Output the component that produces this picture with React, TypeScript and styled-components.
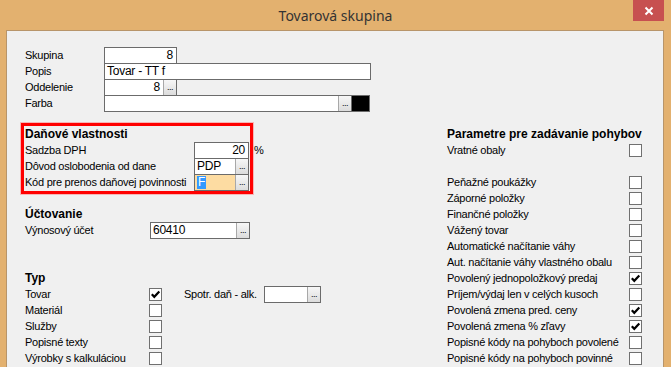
import React from "react";
import styled, { createGlobalStyle } from "styled-components";

const GlobalStyle = createGlobalStyle`
  html, body {
    margin: 0;
    padding: 0;
  }

  body {
    background: #e3b16f;
    font-family: "Liberation Sans", Arial, sans-serif;
  }
`;

const Window = styled.div`
  position: relative;
  display: flex;
  flex-direction: column;
  width: 671px;
  height: 367px;
  overflow: hidden;
  background: #e3b16f;
`;

const TitleBar = styled.div`
  flex: none;
  display: flex;
  align-items: center;
  justify-content: center;
  height: 30px;
  font-family: "Noto Sans", "Open Sans", sans-serif;
  font-size: 14px;
  color: #333;
`;

const CloseButton = styled.div`
  position: absolute;
  top: 0;
  right: 7px;
  display: flex;
  align-items: center;
  justify-content: center;
  width: 31px;
  height: 21px;
  background: #c75050;
`;

const Client = styled.div`
  flex: 1;
  width: 658px;
  margin-left: 6px;
  box-sizing: border-box;
  padding-top: 16px;
  background: #f0f0f0;
  border: 1px solid #b8956a;
  border-bottom: none;
  font-family: "Liberation Sans", Arial, sans-serif;
  font-size: 11px;
  letter-spacing: -0.25px;
  color: #000;
`;

const TopForm = styled.div`
  padding-left: 18px;
`;

const Row = styled.div`
  display: flex;
  align-items: flex-start;
  height: 16px;
  line-height: 16px;
`;

const Label = styled.div<{ $width: number }>`
  flex: none;
  width: ${(p) => p.$width}px;
  white-space: nowrap;
`;

const Field = styled.div<{ $width: number; $bg?: string }>`
  position: relative;
  flex: none;
  display: flex;
  width: ${(p) => p.$width}px;
  height: 17px;
  box-sizing: border-box;
  border: 1px solid #6b6b6b;
  background: ${(p) => p.$bg ?? "#fff"};
`;

const FieldValue = styled.div<{ $align?: "left" | "right" }>`
  flex: 1;
  padding: 0 ${(p) => (p.$align === "right" ? "3px" : "2px")};
  line-height: 15px;
  font-size: 12px;
  text-align: ${(p) => p.$align ?? "left"};
  white-space: nowrap;
  overflow: hidden;
`;

const EllipsisButton = styled.div`
  flex: none;
  display: flex;
  align-items: center;
  justify-content: center;
  width: 12px;
  border-left: 1px solid #a8a8a8;
  background: linear-gradient(#f7f7f7, #dcdcdc);
  font-size: 9px;
  line-height: 15px;
  letter-spacing: -0.5px;
`;

const Swatch = styled.div`
  flex: none;
  width: 19px;
  height: 17px;
  margin-left: -1px;
  box-sizing: border-box;
  border: 1px solid #6b6b6b;
  background: #000;
`;

const Suffix = styled.span`
  position: absolute;
  top: 0;
  left: calc(100% + 6px);
  line-height: 15px;
  font-size: 11px;
`;

const Selection = styled.span`
  display: inline-block;
  padding: 0 1px;
  line-height: 13px;
  background: #3399ff;
  color: #fff;
`;

const Columns = styled.div`
  display: flex;
  margin-top: 12px;
  padding-left: 14px;
`;

const LeftColumn = styled.div`
  flex: none;
  width: 426px;
`;

const RightColumn = styled.div`
  flex: none;
  width: 196px;
  padding-top: 3px;
`;

const TaxBox = styled.div`
  width: 232px;
  box-sizing: border-box;
  padding: 0 1px 1px 1px;
  border: 3px solid #f00;
  outline: 1px solid rgba(255, 110, 110, 0.45);
`;

const Block = styled.div<{ $top: number }>`
  margin-top: ${(p) => p.$top}px;
  padding-left: 4px;
`;

const SectionHeader = styled.div`
  height: 16px;
  line-height: 16px;
  font-size: 12px;
  font-weight: bold;
  letter-spacing: 0;
  white-space: nowrap;
`;

const CheckBox = styled.span`
  flex: none;
  display: flex;
  align-items: center;
  justify-content: center;
  width: 13px;
  height: 13px;
  margin-top: 2px;
  box-sizing: border-box;
  border: 1px solid #707070;
  background: #fff;
`;

const Spacer = styled.div`
  height: 16px;
`;

const SideLabel = styled(Label)`
  margin-left: 22px;
`;

const Check: React.FC<{ checked?: boolean }> = ({ checked }) => (
  <CheckBox>
    {checked && (
      <svg width="11" height="11" viewBox="0 0 11 11">
        <path d="M1.8 5.2 L4.3 7.8 L9.3 2.6" fill="none" stroke="#000" strokeWidth="2.2" />
      </svg>
    )}
  </CheckBox>
);

const movementOptions: { label: string; checked?: boolean }[] = [
  { label: "Peňažné poukážky" },
  { label: "Záporné položky" },
  { label: "Finančné položky" },
  { label: "Vážený tovar" },
  { label: "Automatické načítanie váhy" },
  { label: "Aut. načítanie váhy vlastného obalu" },
  { label: "Povolený jednopoložkový predaj", checked: true },
  { label: "Príjem/výdaj len v celých kusoch" },
  { label: "Povolená zmena pred. ceny", checked: true },
  { label: "Povolená zmena % zľavy", checked: true },
  { label: "Popisné kódy na pohyboch povolené" },
  { label: "Popisné kódy na pohyboch povinné" },
];

const typeOptions: { label: string; checked?: boolean }[] = [
  { label: "Materiál" },
  { label: "Služby" },
  { label: "Popisné texty" },
  { label: "Výrobky s kalkuláciou" },
];

const App: React.FC = () => {
  return (
    <Window>
      <GlobalStyle />
      <TitleBar>Tovarová skupina</TitleBar>
      <CloseButton>
        <svg width="10" height="10" viewBox="0 0 10 10">
          <path d="M1.5 1.5 L8.5 8.5 M8.5 1.5 L1.5 8.5" stroke="#fff" strokeWidth="2" />
        </svg>
      </CloseButton>

      <Client>
        <TopForm>
          <Row>
            <Label $width={79}>Skupina</Label>
            <Field $width={73}>
              <FieldValue $align="right">8</FieldValue>
            </Field>
          </Row>
          <Row>
            <Label $width={79}>Popis</Label>
            <Field $width={267}>
              <FieldValue>Tovar - TT f</FieldValue>
            </Field>
          </Row>
          <Row>
            <Label $width={79}>Oddelenie</Label>
            <Field $width={73}>
              <FieldValue $align="right">8</FieldValue>
              <EllipsisButton>...</EllipsisButton>
            </Field>
          </Row>
          <Row>
            <Label $width={79}>Farba</Label>
            <Field $width={248}>
              <FieldValue />
              <EllipsisButton>...</EllipsisButton>
            </Field>
            <Swatch />
          </Row>
        </TopForm>

        <Columns>
          <LeftColumn>
            <TaxBox>
              <SectionHeader>Daňové vlastnosti</SectionHeader>
              <Row>
                <Label $width={169}>Sadzba DPH</Label>
                <Field $width={55}>
                  <FieldValue $align="right">20</FieldValue>
                  <Suffix>%</Suffix>
                </Field>
              </Row>
              <Row>
                <Label $width={169}>Dôvod oslobodenia od dane</Label>
                <Field $width={55}>
                  <FieldValue>PDP</FieldValue>
                  <EllipsisButton>...</EllipsisButton>
                </Field>
              </Row>
              <Row>
                <Label $width={169}>Kód pre prenos daňovej povinnosti</Label>
                <Field $width={55} $bg="#fddca2">
                  <FieldValue>
                    <Selection>F</Selection>
                  </FieldValue>
                  <EllipsisButton>...</EllipsisButton>
                </Field>
              </Row>
            </TaxBox>

            <Block $top={12}>
              <SectionHeader>Účtovanie</SectionHeader>
              <Row>
                <Label $width={125}>Výnosový účet</Label>
                <Field $width={100}>
                  <FieldValue>60410</FieldValue>
                  <EllipsisButton>...</EllipsisButton>
                </Field>
              </Row>
            </Block>

            <Block $top={32}>
              <SectionHeader>Typ</SectionHeader>
              <Row>
                <Label $width={124}>Tovar</Label>
                <Check checked />
                <SideLabel $width={80}>Spotr. daň - alk.</SideLabel>
                <Field $width={57}>
                  <FieldValue />
                  <EllipsisButton>...</EllipsisButton>
                </Field>
              </Row>
              {typeOptions.map((option) => (
                <Row key={option.label}>
                  <Label $width={124}>{option.label}</Label>
                  <Check checked={option.checked} />
                </Row>
              ))}
            </Block>
          </LeftColumn>

          <RightColumn>
            <SectionHeader>Parametre pre zadávanie pohybov</SectionHeader>
            <Row>
              <Label $width={182}>Vratné obaly</Label>
              <Check />
            </Row>
            <Spacer />
            {movementOptions.map((option) => (
              <Row key={option.label}>
                <Label $width={182}>{option.label}</Label>
                <Check checked={option.checked} />
              </Row>
            ))}
          </RightColumn>
        </Columns>
      </Client>
    </Window>
  );
};

export default App;
